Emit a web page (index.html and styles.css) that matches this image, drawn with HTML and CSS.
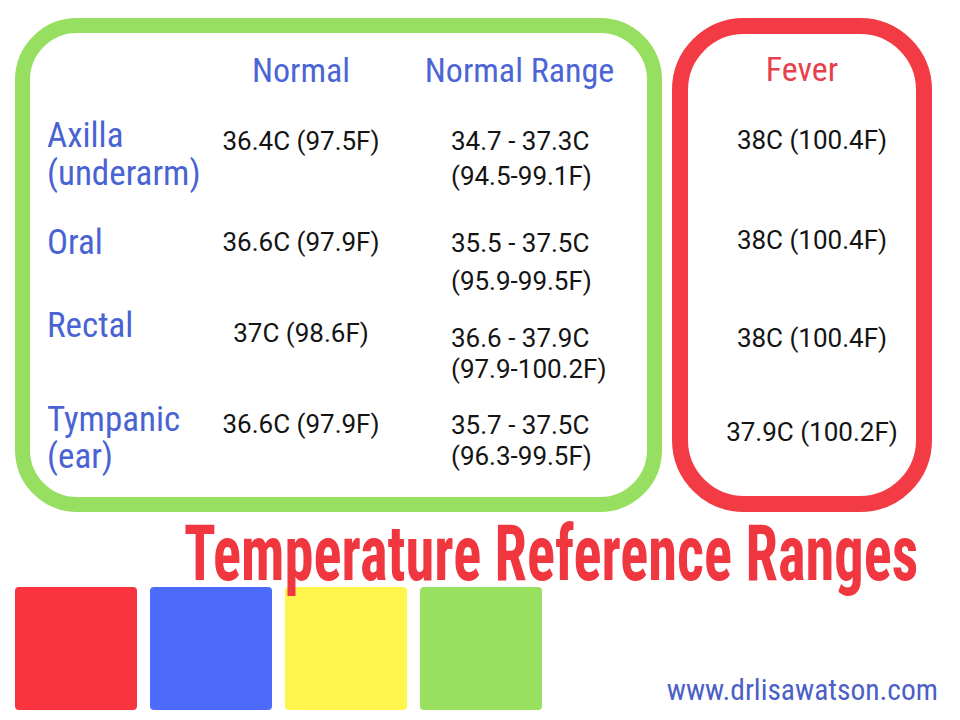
FILE: index.html
```html
<!DOCTYPE html>
<html lang="en">
<head>
<meta charset="utf-8">
<title>Temperature Reference Ranges</title>
<link rel="stylesheet" href="styles.css">
</head>
<body>
<div class="page">
  <div class="top">
    <section class="normal-box">
      <div class="row head">
        <div class="cell"></div>
        <div class="cell h c">Normal</div>
        <div class="cell h c">Normal Range</div>
      </div>
      <div class="row r1">
        <div class="cell label">Axilla<br>(underarm)</div>
        <div class="cell val c">36.4C (97.5F)</div>
        <div class="cell val rng">34.7 - 37.3C<br>(94.5-99.1F)</div>
      </div>
      <div class="row r2">
        <div class="cell label">Oral</div>
        <div class="cell val c">36.6C (97.9F)</div>
        <div class="cell val rng">35.5 - 37.5C<br>(95.9-99.5F)</div>
      </div>
      <div class="row r3">
        <div class="cell label">Rectal</div>
        <div class="cell val c">37C (98.6F)</div>
        <div class="cell val rng">36.6 - 37.9C<br>(97.9-100.2F)</div>
      </div>
      <div class="row r4">
        <div class="cell label">Tympanic<br>(ear)</div>
        <div class="cell val c">36.6C (97.9F)</div>
        <div class="cell val rng">35.7 - 37.5C<br>(96.3-99.5F)</div>
      </div>
    </section>
    <section class="fever-box">
      <div class="fh">Fever</div>
      <div class="fv f1">38C (100.4F)</div>
      <div class="fv f2">38C (100.4F)</div>
      <div class="fv f3">38C (100.4F)</div>
      <div class="fv f4">37.9C (100.2F)</div>
    </section>
  </div>
  <h1 class="title"><span class="title-text">Temperature Reference Ranges</span></h1>
  <div class="bottom">
    <div class="swatch red"></div>
    <div class="swatch blue"></div>
    <div class="swatch yellow"></div>
    <div class="swatch green"></div>
    <div class="url">www.drlisawatson.com</div>
  </div>
</div>
</body>
</html>
```
FILE: styles.css
```css
* { box-sizing: border-box; }
html, body { margin: 0; padding: 0; background: #fff; }
body {
  font-family: "Roboto Condensed", Roboto, "Liberation Sans", sans-serif;
  color: #141414;
}
.page { width: 960px; height: 720px; overflow: hidden; }

.top {
  display: flex;
  gap: 10px;
  padding: 18px 0 0 15px;
}
.normal-box {
  width: 647px;
  height: 494px;
  border: 15px solid #97df61;
  border-radius: 62px;
  padding: 17px 0 0 17px;
}
.row {
  display: grid;
  grid-template-columns: 163px 182px 1fr;
  align-items: start;
}
.cell.c { text-align: center; }
.h {
  font-size: 34px;
  line-height: 40px;
  color: #4c65d6;
}
.head { height: 67px; }
.label {
  font-size: 35px;
  line-height: 38px;
  color: #4a63d3;
}
.val, .fv {
  font-family: Roboto, "Liberation Sans", sans-serif;
  font-size: 26px;
  line-height: 36px;
  color: #141414;
}
.rng { padding-left: 59px; }

.r1 { height: 107px; }
.r1 .c { margin-top: 6px; }
.r1 .rng { margin-top: 7px; line-height: 35px; }

.r2 { height: 83px; }
.r2 .rng { line-height: 38px; }

.r3 { height: 94px; }
.r3 .c { margin-top: 8px; }
.r3 .rng { margin-top: 16px; line-height: 31px; }

.r4 .label { line-height: 37px; }
.r4 .c { margin-top: 5px; }
.r4 .rng { margin-top: 9px; line-height: 31px; }

.fever-box {
  width: 260px;
  height: 494px;
  border: 16px solid #f33b45;
  border-radius: 72px;
  padding-top: 15px;
  display: flex;
  flex-direction: column;
  align-items: center;
}
.fh {
  font-size: 34px;
  line-height: 40px;
  color: #e8404a;
}
.fv { padding-left: 20px; }
.f1 { margin-top: 33px; }
.f2 { margin-top: 64px; }
.f3 { margin-top: 62px; }
.f4 { margin-top: 58px; }

.title {
  display: flex;
  justify-content: flex-end;
  margin: 11px 0 0;
  padding-right: 42px;
  font-size: 77px;
  line-height: 62px;
  font-weight: 700;
  color: #f0363f;
  white-space: nowrap;
}
.title-text {
  display: block;
  flex: none;
  transform: scaleX(0.76);
  transform-origin: right center;
}

.bottom {
  display: flex;
  gap: 13px;
  padding-left: 15px;
  margin-top: 2px;
  height: 123px;
}
.swatch {
  width: 122px;
  height: 123px;
  border-radius: 4px;
}
.red { background: #f9343e; }
.blue { background: #4d6bfb; }
.yellow { background: #fff54d; }
.green { background: #98e060; }
.url {
  margin-left: auto;
  margin-right: 22px;
  align-self: flex-end;
  margin-bottom: 5px;
  font-size: 29.5px;
  line-height: 30px;
  color: #4b5fc6;
}
```
